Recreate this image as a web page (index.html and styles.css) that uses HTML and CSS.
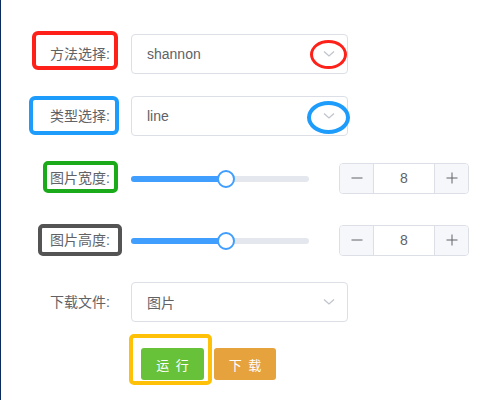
FILE: index.html
```html
<!DOCTYPE html>
<html lang="zh">
<head>
<meta charset="utf-8">
<link rel="stylesheet" href="styles.css">
</head>
<body>
<div class="page">
  <form class="form">
    <div class="item">
      <label class="label">方法选择:</label>
      <div class="select"><span>shannon</span>
        <svg class="arrow" viewBox="0 0 12 8" width="12" height="8"><path d="M1 1.5 L6 6 L11 1.5" fill="none" stroke="#c0c4cc" stroke-width="1.3"/></svg>
      </div>
    </div>
    <div class="item">
      <label class="label">类型选择:</label>
      <div class="select"><span>line</span>
        <svg class="arrow" viewBox="0 0 12 8" width="12" height="8"><path d="M1 1.5 L6 6 L11 1.5" fill="none" stroke="#c0c4cc" stroke-width="1.3"/></svg>
      </div>
    </div>
    <div class="item">
      <label class="label">图片宽度:</label>
      <div class="slider">
        <div class="runway"><div class="bar" style="width:53.4%"></div><div class="thumb" style="left:53.4%"></div></div>
        <div class="number">
          <span class="btn minus"><svg viewBox="0 0 12 12" width="12" height="12"><path d="M0.5 6 H11.5" stroke="#606266" stroke-width="1"/></svg></span>
          <span class="val">8</span>
          <span class="btn plus"><svg viewBox="0 0 12 12" width="12" height="12"><path d="M0.5 6 H11.5 M6 0.5 V11.5" stroke="#606266" stroke-width="1"/></svg></span>
        </div>
      </div>
    </div>
    <div class="item">
      <label class="label">图片高度:</label>
      <div class="slider">
        <div class="runway"><div class="bar" style="width:53.4%"></div><div class="thumb" style="left:53.4%"></div></div>
        <div class="number">
          <span class="btn minus"><svg viewBox="0 0 12 12" width="12" height="12"><path d="M0.5 6 H11.5" stroke="#606266" stroke-width="1"/></svg></span>
          <span class="val">8</span>
          <span class="btn plus"><svg viewBox="0 0 12 12" width="12" height="12"><path d="M0.5 6 H11.5 M6 0.5 V11.5" stroke="#606266" stroke-width="1"/></svg></span>
        </div>
      </div>
    </div>
    <div class="item">
      <label class="label">下载文件:</label>
      <div class="select"><span>图片</span>
        <svg class="arrow" viewBox="0 0 12 8" width="12" height="8"><path d="M1 1.5 L6 6 L11 1.5" fill="none" stroke="#c0c4cc" stroke-width="1.3"/></svg>
      </div>
    </div>
    <div class="item buttons">
      <span class="label"></span>
      <button type="button" class="button run">运 行</button>
      <button type="button" class="button download">下 载</button>
    </div>
  </form>
  <div class="mark red-rect"></div>
  <div class="mark red-ellipse"></div>
  <div class="mark blue-rect"></div>
  <div class="mark blue-ellipse"></div>
  <div class="mark green-rect"></div>
  <div class="mark gray-rect"></div>
  <div class="mark yellow-rect"></div>
</div>
</body>
</html>
```
FILE: styles.css
```css
html, body {
  margin: 0;
  padding: 0;
  background: #fff;
}
body {
  font-family: "Liberation Sans", "Noto Sans CJK SC", sans-serif;
  font-size: 14px;
  color: #606266;
}
.page {
  position: relative;
  min-height: 400px;
  border-left: 1px solid #0b2c5c;
  box-sizing: border-box;
  overflow: hidden;
}
.form {
  padding-top: 34px;
  display: flex;
  flex-direction: column;
  gap: 22px;
}
.item {
  display: flex;
  align-items: center;
  height: 40px;
}
.label {
  width: 130px;
  box-sizing: border-box;
  padding-right: 21px;
  text-align: right;
  font-size: 14px;
  color: #606266;
  line-height: 40px;
  flex: none;
}
.select {
  width: 217px;
  height: 40px;
  box-sizing: border-box;
  border: 1px solid #dcdfe6;
  border-radius: 4px;
  padding: 0 12px 0 15px;
  display: flex;
  align-items: center;
  justify-content: space-between;
  color: #606266;
}
.arrow {
  display: block;
}
.slider {
  display: flex;
  align-items: center;
}
.runway {
  position: relative;
  width: 178px;
  height: 6px;
  border-radius: 3px;
  background: #e4e7ed;
  margin-top: 2px;
}
.bar {
  height: 6px;
  border-radius: 3px;
  background: #409eff;
}
.thumb {
  position: absolute;
  top: 50%;
  width: 18px;
  height: 18px;
  box-sizing: border-box;
  border: 2px solid #409eff;
  border-radius: 50%;
  background: #fff;
  transform: translate(-50%, -50%);
}
.number {
  margin-left: 30px;
  width: 130px;
  height: 31px;
  box-sizing: border-box;
  border: 1px solid #dcdfe6;
  border-radius: 4px;
  display: flex;
  overflow: hidden;
}
.number .btn {
  width: 33px;
  background: #f5f7fa;
  display: flex;
  align-items: center;
  justify-content: center;
  flex: none;
}
.number .btn svg {
  display: block;
}
.number .minus {
  border-right: 1px solid #dcdfe6;
}
.number .plus {
  border-left: 1px solid #dcdfe6;
}
.number .val {
  flex: 1;
  display: flex;
  align-items: center;
  justify-content: center;
  font-size: 14px;
  color: #606266;
}
.buttons .label {
  width: 140px;
  padding: 0;
}
.button {
  height: 32px;
  border: none;
  border-radius: 3px;
  color: #fff;
  font-family: "Liberation Sans", "Noto Sans CJK SC", sans-serif;
  font-size: 13px;
  letter-spacing: 1.5px;
  text-indent: 1.5px;
  padding: 0;
  margin-right: 10px;
  text-align: center;
}
.run {
  width: 63px;
  background: #67c23a;
}
.download {
  width: 62px;
  background: #e6a23c;
}
.mark {
  position: absolute;
  box-sizing: border-box;
  border-style: solid;
  pointer-events: none;
}
.red-rect {
  left: 31px; top: 31px; width: 86px; height: 39px;
  border-width: 4px; border-color: #fe2119; border-radius: 6px;
}
.red-ellipse {
  left: 309px; top: 40px; width: 37px; height: 29px;
  border-width: 3px; border-color: #fe2119; border-radius: 50%;
}
.blue-rect {
  left: 28px; top: 96px; width: 90px; height: 39px;
  border-width: 4px; border-color: #1e9cfc; border-radius: 6px;
}
.blue-ellipse {
  left: 306px; top: 101px; width: 43px; height: 33px;
  border-width: 4px; border-color: #1e9cfc; border-radius: 50%;
}
.green-rect {
  left: 42px; top: 161px; width: 75px; height: 32px;
  border-width: 4px; border-color: #1aaa1a; border-radius: 5px;
}
.gray-rect {
  left: 37px; top: 224px; width: 84px; height: 32px;
  border-width: 4px; border-color: #545454; border-radius: 5px;
}
.yellow-rect {
  left: 128px; top: 334px; width: 83px; height: 51px;
  border-width: 4px; border-color: #ffc107; border-radius: 5px;
}
```
